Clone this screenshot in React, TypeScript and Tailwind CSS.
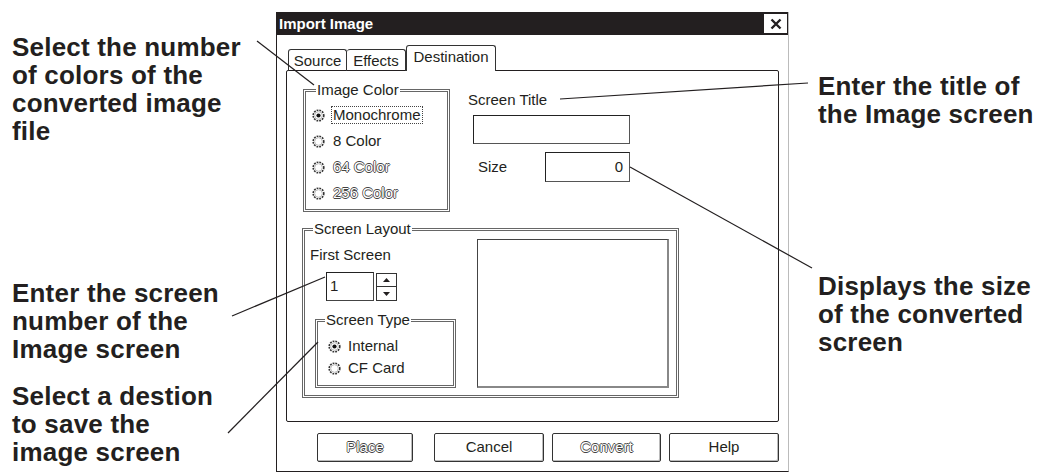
import React from 'react';

const ink = '#231f20';
const disabledText =
  'text-white [text-shadow:0.8px_0_0_#444,-0.8px_0_0_#444,0_0.8px_0_#444,0_-0.8px_0_#444]';

const Radio = ({ checked }: { checked?: boolean }) => (
  <svg width="13" height="13" viewBox="0 0 13 13" className="shrink-0">
    <circle cx="6.5" cy="6.5" r="5.3" fill="white" stroke="#333" strokeWidth="1.6" strokeDasharray="1.8 1" />
    <circle cx="6.5" cy="6.5" r="3.8" fill="none" stroke="#aaa" strokeWidth="0.8" />
    {checked && <circle cx="6.5" cy="6.5" r="2.1" fill="#111" />}
  </svg>
);

interface OptionProps {
  label: string;
  checked?: boolean;
  disabled?: boolean;
  focused?: boolean;
  rowClass: string;
  gapClass: string;
}

const Option: React.FC<OptionProps> = ({ label, checked, disabled, focused, rowClass, gapClass }) => (
  <div className={`flex items-center ${rowClass}`}>
    <Radio checked={checked} />
    <span
      className={`${gapClass} px-[1px] leading-[16px] border ${
        focused ? 'border-dotted border-[#444]' : 'border-transparent'
      } ${disabled ? disabledText : ''}`}
    >
      {label}
    </span>
  </div>
);

const Btn = ({ label, disabled, className }: { label: string; disabled?: boolean; className: string }) => (
  <div
    className={`${className} h-[29px] flex items-center justify-center border border-[#333] rounded-[2px] bg-white shadow-[inset_-1px_-1px_0_#bbb]`}
  >
    <span className={disabled ? disabledText : ''}>{label}</span>
  </div>
);

const App: React.FC = () => {
  return (
    <div
      className="relative w-[1047px] h-[476px] bg-white flex overflow-hidden text-[#231f20] font-['Liberation_Sans',Arial,sans-serif]"
    >
      {/* left notes */}
      <div className="w-[276px] pl-[12px] flex flex-col text-[26px] font-bold leading-[28px] whitespace-nowrap tracking-[0.2px]">
        <div className="mt-[33px]">
          <div>Select the number</div>
          <div>of colors of the</div>
          <div>converted image</div>
          <div>file</div>
        </div>
        <div className="mt-[134px]">
          <div>Enter the screen</div>
          <div>number of the</div>
          <div>Image screen</div>
        </div>
        <div className="mt-[19px]">
          <div>Select a destion</div>
          <div>to save the</div>
          <div>image screen</div>
        </div>
      </div>

      {/* dialog */}
      <div className="w-[513px] h-[460px] mt-[12px] flex flex-col border-l border-b border-r border-l-[#231f20] border-b-[#231f20] border-r-[#bbb] text-[15px]">
        <div className="h-[23px] bg-[#231f20] flex items-center pl-[2px] pr-[1px]">
          <span className="text-white font-bold text-[15px] leading-[18px]">Import Image</span>
          <div className="ml-auto w-[23px] h-[19px] bg-white flex items-center justify-center">
            <svg width="12" height="12" viewBox="0 0 12 12">
              <path d="M1.5 1.5 L10.5 10.5 M10.5 1.5 L1.5 10.5" stroke={ink} strokeWidth="2.4" />
            </svg>
          </div>
        </div>

        <div className="px-[9px] pt-[10px]">
          {/* tabs */}
          <div className="h-[26px] -mb-px flex items-end ml-[2px]">
            <div className="w-[59px] h-[22px] border-l border-t border-r border-[#333] rounded-t-[3px] flex items-center justify-center pt-[1px]">
              Source
            </div>
            <div className="w-[59px] h-[22px] border-t border-r border-[#333] rounded-t-[3px] flex items-center justify-center pt-[1px]">
              Effects
            </div>
            <div className="relative z-10 w-[90px] h-[26px] bg-white border-l border-t border-r border-[#333] rounded-t-[3px] flex items-center justify-center pb-[2px]">
              Destination
            </div>
          </div>

          {/* panel */}
          <div className="h-[352px] border border-[#231f20] rounded-[2px]">
            <div className="flex items-start ml-[16px] mt-[11px]">
              <fieldset className="w-[147px] h-[130px] border-[3px] border-double border-[#666]">
                <legend className="ml-[10px] px-[1px] leading-[16px]">Image Color</legend>
                <div className="mt-[4px] pl-[6px]">
                  <Option label="Monochrome" checked focused rowClass="h-[26px]" gapClass="ml-[6px]" />
                  <Option label="8 Color" rowClass="h-[26px]" gapClass="ml-[6px]" />
                  <Option label="64 Color" disabled rowClass="h-[26px]" gapClass="ml-[6px]" />
                  <Option label="256 Color" disabled rowClass="h-[26px]" gapClass="ml-[6px]" />
                </div>
              </fieldset>

              <div className="ml-[18px] mt-[10px] w-[162px]">
                <div className="leading-[16px]">Screen Title</div>
                <div className="mt-[7px] ml-[5px] w-[157px] h-[29px] border border-[#555] border-t-[#222] border-l-[#222]" />
                <div className="mt-[8px] flex items-center">
                  <span className="ml-[10px] leading-[16px]">Size</span>
                  <div className="ml-auto w-[85px] h-[30px] border border-[#555] border-t-[#222] border-l-[#222] flex items-center justify-end pr-[6px]">
                    0
                  </div>
                </div>
              </div>
            </div>

            <fieldset className="ml-[15px] mt-[9px] w-[377px] h-[177px] border-[3px] border-double border-[#666]">
              <legend className="ml-[8px] px-[1px] leading-[16px]">Screen Layout</legend>
              <div className="flex items-start">
                <div className="w-[151px]">
                  <div className="ml-[5px] mt-[10px] leading-[16px]">First Screen</div>
                  <div className="mt-[9px] ml-[21px] flex items-start">
                    <div className="w-[48px] h-[29px] border border-[#444] border-t-[#222] border-l-[#222] flex items-center pl-[3px]">
                      1
                    </div>
                    <div className="ml-[2px] mt-[1px] w-[21px] flex flex-col">
                      <div className="h-[14px] border border-[#333] flex items-center justify-center">
                        <svg width="7" height="4" viewBox="0 0 7 4">
                          <path d="M3.5 0 L7 4 L0 4 Z" fill={ink} />
                        </svg>
                      </div>
                      <div className="h-[14px] border border-t-0 border-[#333] flex items-center justify-center">
                        <svg width="7" height="4" viewBox="0 0 7 4">
                          <path d="M0 0 L7 0 L3.5 4 Z" fill={ink} />
                        </svg>
                      </div>
                    </div>
                  </div>
                  <fieldset className="mt-[11px] ml-[10px] w-[141px] h-[76px] border-[3px] border-double border-[#666]">
                    <legend className="ml-[7px] px-[1px] leading-[16px]">Screen Type</legend>
                    <div className="mt-[7px] pl-[10px]">
                      <Option label="Internal" checked rowClass="h-[22px]" gapClass="ml-[5px]" />
                      <Option label="CF Card" rowClass="h-[22px]" gapClass="ml-[5px]" />
                    </div>
                  </fieldset>
                </div>
                <div className="ml-[21px] mt-[2px] w-[192px] h-[149px] border border-[#444] border-r-2 border-b-2 border-r-[#888] border-b-[#888]" />
              </div>
            </fieldset>
          </div>

          {/* buttons */}
          <div className="mt-[11px] flex">
            <Btn label="Place" disabled className="ml-[31px] w-[96px]" />
            <Btn label="Cancel" className="ml-[21px] w-[110px]" />
            <Btn label="Convert" disabled className="ml-[8px] w-[109px]" />
            <Btn label="Help" className="ml-[8px] w-[110px]" />
          </div>
        </div>
      </div>

      {/* right notes */}
      <div className="flex-1 pl-[29px] flex flex-col text-[26px] font-bold leading-[28px] whitespace-nowrap tracking-[0.2px]">
        <div className="mt-[72px]">
          <div>Enter the title of</div>
          <div>the Image screen</div>
        </div>
        <div className="mt-[144px]">
          <div>Displays the size</div>
          <div>of the converted</div>
          <div>screen</div>
        </div>
      </div>

      {/* leader lines */}
      <svg className="absolute inset-0 pointer-events-none" width="1047" height="476" viewBox="0 0 1047 476">
        <g stroke={ink} strokeWidth="1.2" fill="none">
          <line x1="257" y1="41" x2="314" y2="85" />
          <line x1="560" y1="99" x2="808" y2="83" />
          <line x1="630" y1="167" x2="812" y2="268" />
          <line x1="232" y1="316" x2="325" y2="277" />
          <line x1="228" y1="433" x2="318" y2="342" />
        </g>
      </svg>
    </div>
  );
};

export default App;
